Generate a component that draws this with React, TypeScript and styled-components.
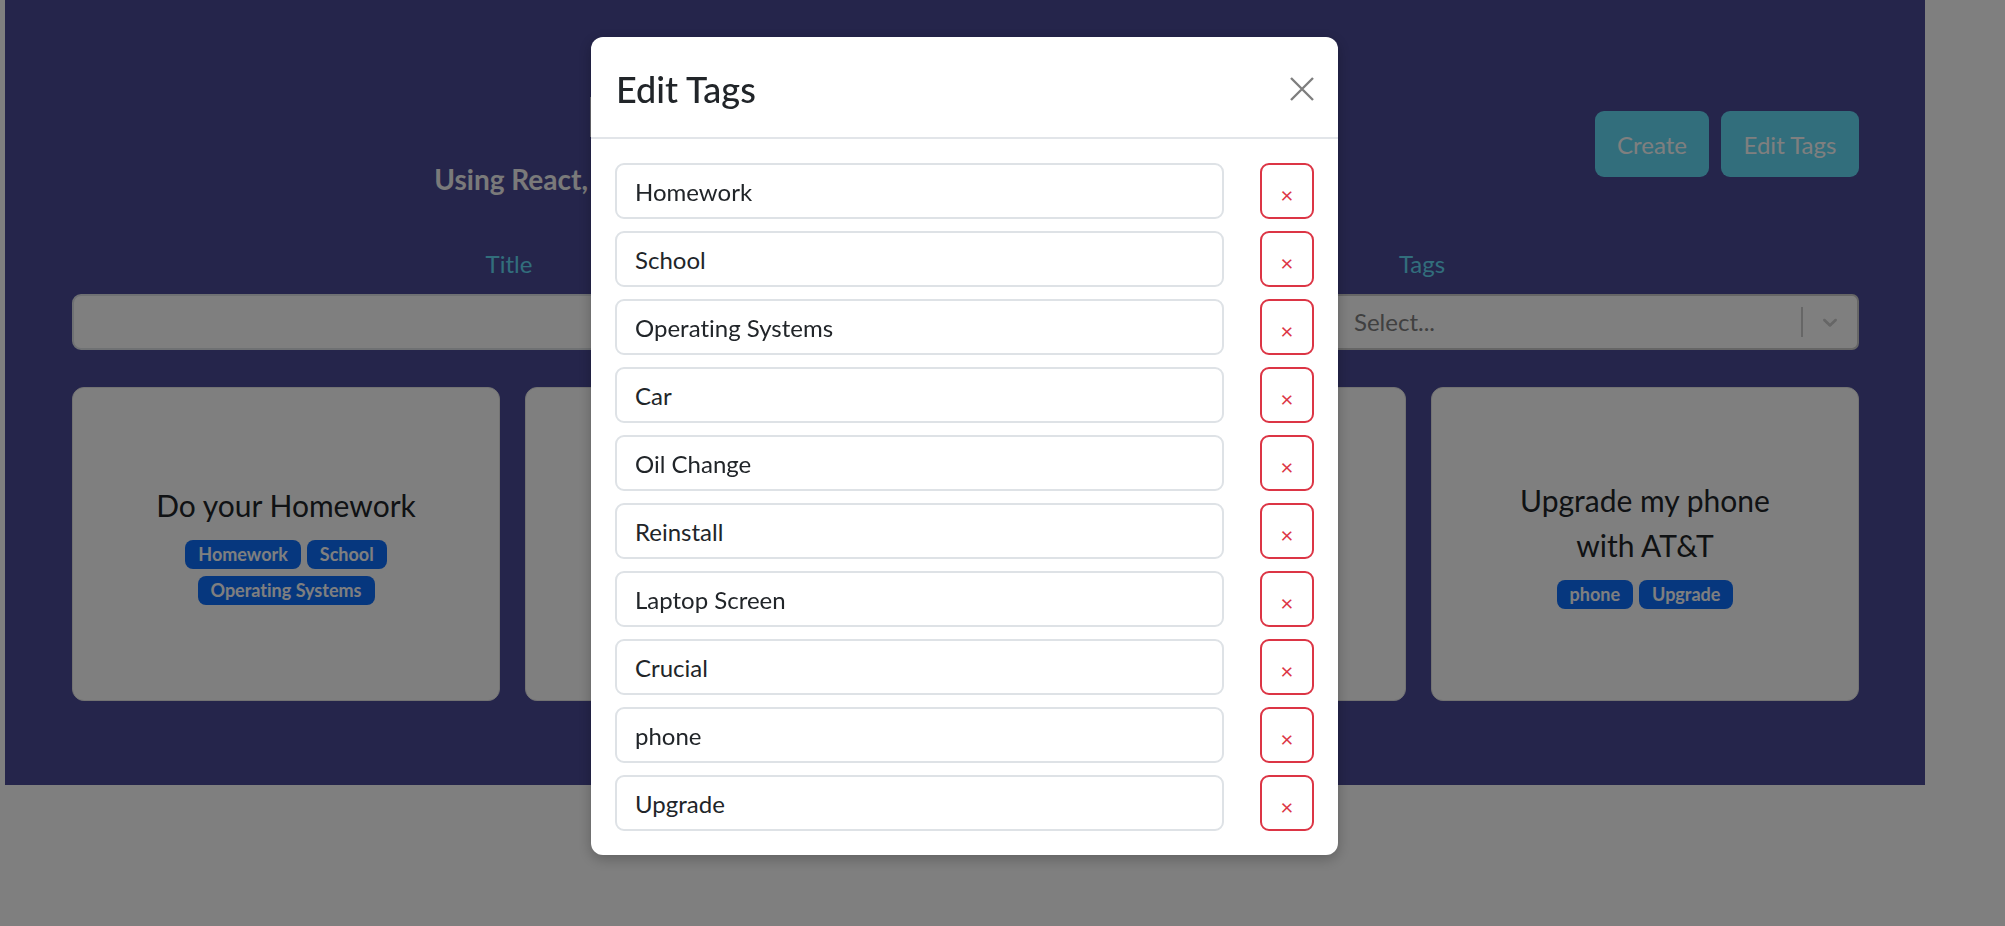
import React from "react";
import styled, { createGlobalStyle } from "styled-components";

const GlobalStyle = createGlobalStyle`
  html, body { margin: 0; padding: 0; background: #ffffff; }
  body {
    font-family: "Segoe UI", Lato, "Liberation Sans", sans-serif;
    font-variant-ligatures: none;
    width: 2005px;
    height: 926px;
    overflow: hidden;
  }
  * { box-sizing: border-box; }
  input, button { font-variant-ligatures: none; }
`;

const Page = styled.div`
  width: 1920px;
  height: 785px;
  margin-left: 5px;
  background: #4a4a96;
  padding: 82px 66px 84px 67px;
  display: flex;
  flex-direction: column;
`;

const HeaderRow = styled.div`
  display: flex;
  justify-content: space-between;
  align-items: flex-start;
`;

const TitleBlock = styled.div`
  width: 1174px;
  text-align: center;
`;

const AppTitle = styled.h1`
  margin: 0;
  font-size: 56px;
  line-height: 1.2;
  font-weight: 500;
  color: #f4f4f4;
`;

const Subtitle = styled.div`
  margin-top: 14px;
  font-size: 28px;
  line-height: 1.2;
  font-weight: 700;
  color: #f4f4f4;
`;

const ButtonGroup = styled.div`
  display: flex;
  gap: 12px;
  margin-top: 29px;
`;

const PageButton = styled.button<{ $w: number }>`
  width: ${(p) => p.$w}px;
  height: 66px;
  border: none;
  border-radius: 9px;
  background: #64dcf8;
  color: #ffffff;
  font-family: inherit;
  font-size: 24px;
  padding: 0;
`;

const FilterRow = styled.div`
  display: grid;
  grid-template-columns: 1fr 1fr;
  column-gap: 39px;
  margin-top: 49px;
`;

const FieldGroup = styled.div`
  display: flex;
  flex-direction: column;
`;

const FieldLabel = styled.label`
  text-align: center;
  font-size: 24px;
  line-height: 36px;
  color: #64dcf8;
  margin-bottom: 12px;
`;

const TextField = styled.div`
  height: 56px;
  background: #ffffff;
  border: 2px solid #dee2e6;
  border-radius: 9px;
`;

const SelectControl = styled.div`
  height: 56px;
  background: #ffffff;
  border: 2px solid #cccccc;
  border-radius: 7px;
  display: flex;
  align-items: center;
`;

const SelectValue = styled.div`
  flex: 1;
  padding-left: 367px;
  font-size: 24px;
  color: #808080;
`;

const SelectSeparator = styled.span`
  width: 2px;
  height: 30px;
  background: #cccccc;
`;

const SelectIndicator = styled.span`
  width: 54px;
  display: flex;
  justify-content: center;
  align-items: center;
  color: #cccccc;
`;

const CardGrid = styled.div`
  display: grid;
  grid-template-columns: repeat(4, 1fr);
  gap: 25px;
  margin-top: 37px;
  height: 314px;
`;

const NoteCard = styled.div`
  background: #ffffff;
  border: 1px solid #e6e6e6;
  border-radius: 12px;
  display: flex;
  flex-direction: column;
  align-items: center;
  justify-content: center;
`;

const CardTitle = styled.div`
  max-width: 290px;
  text-align: center;
  font-size: 30px;
  line-height: 45px;
  color: #212529;
`;

const BadgeList = styled.div`
  max-width: 290px;
  margin-top: 12px;
  display: flex;
  flex-wrap: wrap;
  justify-content: center;
  gap: 7px 6px;
`;

const Badge = styled.span`
  display: inline-block;
  height: 29px;
  line-height: 29px;
  padding: 0 13px;
  border-radius: 8px;
  background: #0d6efd;
  color: #ffffff;
  font-size: 18px;
  font-weight: 700;
  white-space: nowrap;
`;

const Backdrop = styled.div`
  position: fixed;
  inset: 0;
  background: rgba(0, 0, 0, 0.5);
`;

const Dialog = styled.div`
  position: fixed;
  top: 37px;
  left: 591px;
  width: 747px;
  background: #ffffff;
  border-radius: 12px;
  box-shadow: 0 4px 14px rgba(0, 0, 0, 0.25);
  display: flex;
  flex-direction: column;
`;

const DialogHeader = styled.div`
  display: flex;
  align-items: center;
  justify-content: space-between;
  padding: 26px 24px 22px 25px;
  border-bottom: 2px solid #e2e5e9;
`;

const DialogTitle = styled.h5`
  margin: 0;
  font-size: 36px;
  line-height: 52px;
  font-weight: 500;
  color: #212529;
`;

const CloseButton = styled.button`
  width: 24px;
  height: 24px;
  padding: 0;
  border: none;
  background: transparent;
  display: flex;
  color: #000000;
  opacity: 0.5;
`;

const DialogBody = styled.div`
  padding: 24px;
  display: flex;
  flex-direction: column;
  gap: 12px;
`;

const TagRow = styled.div`
  display: flex;
  gap: 36px;
`;

const TagInput = styled.input`
  flex: 1;
  height: 56px;
  border: 2px solid #dee2e6;
  border-radius: 9px;
  padding: 0 18px;
  font-family: inherit;
  font-size: 24px;
  color: #212529;
  background: #ffffff;
  outline: none;
`;

const DeleteButton = styled.button`
  width: 54px;
  height: 56px;
  border: 2px solid #dc3545;
  border-radius: 9px;
  background: #ffffff;
  color: #dc3545;
  font-family: inherit;
  font-size: 22px;
  line-height: 1;
  padding: 8px 0 0 0;
  display: flex;
  align-items: center;
  justify-content: center;
`;

const notes = [
  { title: "Do your Homework", tags: ["Homework", "School", "Operating Systems"] },
  { title: "Get an Oil Change", tags: ["Car", "Oil Change"] },
  { title: "Fix my Laptop", tags: ["Reinstall", "Crucial"] },
  { title: "Upgrade my phone with AT&T", tags: ["phone", "Upgrade"] },
];

const tags = [
  "Homework",
  "School",
  "Operating Systems",
  "Car",
  "Oil Change",
  "Reinstall",
  "Laptop Screen",
  "Crucial",
  "phone",
  "Upgrade",
];

export default function App() {
  return (
    <>
      <GlobalStyle />
      <Page>
        <HeaderRow>
          <TitleBlock>
            <AppTitle>Notes</AppTitle>
            <Subtitle>Using React, TypeScript &amp; Bootstrap</Subtitle>
          </TitleBlock>
          <ButtonGroup>
            <PageButton $w={114}>Create</PageButton>
            <PageButton $w={138}>Edit Tags</PageButton>
          </ButtonGroup>
        </HeaderRow>
        <FilterRow>
          <FieldGroup>
            <FieldLabel>Title</FieldLabel>
            <TextField />
          </FieldGroup>
          <FieldGroup>
            <FieldLabel>Tags</FieldLabel>
            <SelectControl>
              <SelectValue>Select...</SelectValue>
              <SelectSeparator />
              <SelectIndicator>
                <svg width="24" height="24" viewBox="0 0 20 20" fill="currentColor">
                  <path d="M4.516 7.548c0.436-0.446 1.043-0.481 1.576 0l3.908 3.747 3.908-3.747c0.533-0.481 1.141-0.446 1.574 0 0.436 0.445 0.408 1.197 0 1.615-0.406 0.418-4.695 4.502-4.695 4.502-0.217 0.223-0.502 0.335-0.787 0.335s-0.57-0.112-0.789-0.335c0 0-4.287-4.084-4.695-4.502s-0.436-1.17 0-1.615z" />
                </svg>
              </SelectIndicator>
            </SelectControl>
          </FieldGroup>
        </FilterRow>
        <CardGrid>
          {notes.map((n) => (
            <NoteCard key={n.title}>
              <CardTitle>{n.title}</CardTitle>
              <BadgeList>
                {n.tags.map((t) => (
                  <Badge key={t}>{t}</Badge>
                ))}
              </BadgeList>
            </NoteCard>
          ))}
        </CardGrid>
      </Page>
      <Backdrop />
      <Dialog>
        <DialogHeader>
          <DialogTitle>Edit Tags</DialogTitle>
          <CloseButton aria-label="Close">
            <svg width="24" height="24" viewBox="0 0 24 24">
              <path d="M1 1L23 23M23 1L1 23" stroke="currentColor" strokeWidth="2.4" />
            </svg>
          </CloseButton>
        </DialogHeader>
        <DialogBody>
          {tags.map((t) => (
            <TagRow key={t}>
              <TagInput defaultValue={t} />
              <DeleteButton>×</DeleteButton>
            </TagRow>
          ))}
        </DialogBody>
      </Dialog>
    </>
  );
}
